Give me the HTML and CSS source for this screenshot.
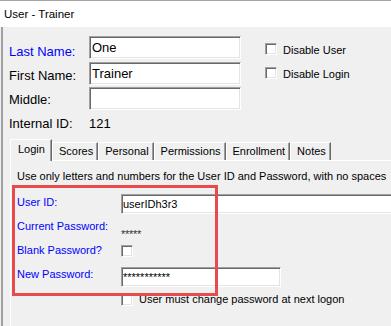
FILE: index.html
```html
<!DOCTYPE html>
<html lang="en">
<head>
<meta charset="utf-8">
<title>User - Trainer</title>
<link rel="stylesheet" href="styles.css">
</head>
<body>
<div class="window">
  <div class="titlebar">User - Trainer</div>
  <div class="body">
    <div class="top">
      <div class="labels">
        <div class="lbl req">Last Name:</div>
        <div class="lbl">First Name:</div>
        <div class="lbl">Middle:</div>
        <div class="lbl">Internal ID:</div>
      </div>
      <div class="fields">
        <input class="field" type="text" value="One">
        <input class="field" type="text" value="Trainer">
        <input class="field" type="text" value="">
        <div class="idval">121</div>
      </div>
      <div class="flags">
        <div class="flag"><span class="check"></span><span class="flagtext">Disable User</span></div>
        <div class="flag"><span class="check"></span><span class="flagtext">Disable Login</span></div>
      </div>
    </div>
    <div class="tabctl">
      <div class="tabs">
        <div class="tab active">Login</div>
        <div class="tab">Scores</div>
        <div class="tab">Personal</div>
        <div class="tab">Permissions</div>
        <div class="tab">Enrollment</div>
        <div class="tab">Notes</div>
      </div>
      <div class="panel">
        <div class="hint">Use only letters and numbers for the User ID and Password, with no spaces</div>
        <div class="form">
          <div class="flabel">User ID:</div>
          <input class="field small uid" type="text" value="userIDh3r3">
          <div class="flabel">Current Password:</div>
          <div class="stars">*****</div>
          <div class="flabel">Blank Password?</div>
          <span class="check formcheck"></span>
          <div class="flabel">New Password:</div>
          <input class="field small newpw" type="text" value="***********">
        </div>
        <div class="mustchange"><span class="check"></span><span class="mctext">User must change password at next logon</span></div>
        <div class="highlight"></div>
      </div>
    </div>
  </div>
</div>
</body>
</html>
```
FILE: styles.css
```css
* { box-sizing: border-box; }

body {
  margin: 0;
  font-family: "Liberation Sans", Arial, sans-serif;
  color: #000;
}

.window {
  width: 391px;
  height: 326px;
  overflow: hidden;
  background: #f0f0f0;
  display: flex;
  flex-direction: column;
}

.titlebar {
  flex: none;
  height: 27px;
  background: #fff;
  border-top: 1px solid #a6a6a6;
  line-height: 26px;
  padding-left: 4px;
  font-size: 11.5px;
  white-space: nowrap;
}

.body {
  flex: 1;
  min-height: 0;
  margin-left: 1px;
  border-left: 2px solid #a0a0a0;
  display: flex;
  flex-direction: column;
}

.top {
  flex: none;
  display: flex;
  padding: 9px 0 0 6px;
}

.labels {
  width: 80px;
  margin-top: 4px;
  font-size: 13px;
}

.lbl {
  line-height: 24px;
  white-space: nowrap;
}

.req { color: #0000ff; }

.fields {
  width: 152px;
  display: flex;
  flex-direction: column;
  gap: 2.5px;
}

.field {
  display: block;
  margin: 0;
  height: 23px;
  width: 152px;
  font: 13px "Liberation Sans", Arial, sans-serif;
  color: #000;
  background: #fff;
  border: 1px solid;
  border-color: #a0a0a0 #fff #fff #a0a0a0;
  box-shadow: inset 1px 1px 0 #696969, inset -1px -1px 0 #e3e3e3;
  padding: 0 0 0 2px;
  outline: none;
}

.idval {
  font-size: 13px;
  line-height: 24px;
  margin-top: -1px;
}

.flags {
  margin-left: 24px;
  margin-top: 1px;
  font-size: 11px;
}

.flag {
  display: flex;
  align-items: center;
  gap: 6px;
  height: 24px;
}

.flagtext {
  line-height: 13px;
  padding-top: 2px;
  white-space: nowrap;
}

.check {
  display: block;
  flex: none;
  width: 12px;
  height: 12px;
  background: #fff;
  border: 1px solid;
  border-color: #a0a0a0 #fff #fff #a0a0a0;
  box-shadow: inset 1px 1px 0 #696969, inset -1px -1px 0 #e3e3e3;
}

.tabctl {
  flex: 1;
  display: flex;
  flex-direction: column;
  margin: 3px 0 0 7px;
}

.tabs {
  flex: none;
  display: flex;
  align-items: flex-end;
  height: 21px;
  font-size: 11px;
}

.tab {
  height: 18px;
  line-height: 13px;
  padding: 2px 4px 0 6px;
  border-top: 1px solid #fff;
  border-left: 1px solid #fff;
  border-right: 1px solid #696969;
  box-shadow: inset -1px 0 0 #a0a0a0;
  white-space: nowrap;
}

.tab.active {
  height: 22px;
  margin-bottom: -1px;
  padding: 3px 6px 0 7px;
  position: relative;
  z-index: 1;
  background: #f0f0f0;
}

.panel {
  flex: 1;
  position: relative;
  border-top: 1px solid #fff;
  border-left: 1px solid #fff;
  padding: 9px 0 0 6px;
  font-size: 11px;
}

.hint {
  line-height: 13px;
  white-space: nowrap;
}

.form {
  display: grid;
  grid-template-columns: 104px 1fr;
  grid-auto-rows: 24px;
  margin-top: 7px;
}

.flabel {
  line-height: 24px;
  color: #0000ff;
  white-space: nowrap;
}

.small {
  height: 20px;
  font-size: 11px;
  padding-left: 1px;
}

.uid {
  width: 290px;
  align-self: end;
  justify-self: start;
}

.stars {
  line-height: 24px;
  padding-top: 8px;
  color: #333;
  letter-spacing: -0.3px;
}

.formcheck {
  align-self: start;
  justify-self: start;
  margin-top: 7px;
}

.newpw {
  width: 160px;
  align-self: start;
  justify-self: start;
  margin-top: 5px;
}

.mustchange {
  display: flex;
  align-items: center;
  gap: 6px;
  margin: 7px 0 0 104px;
}

.mctext {
  line-height: 13px;
  white-space: nowrap;
}

.highlight {
  position: absolute;
  left: 1px;
  top: 24px;
  width: 206px;
  height: 111px;
  border: 3px solid #e74c4c;
  pointer-events: none;
}
```
